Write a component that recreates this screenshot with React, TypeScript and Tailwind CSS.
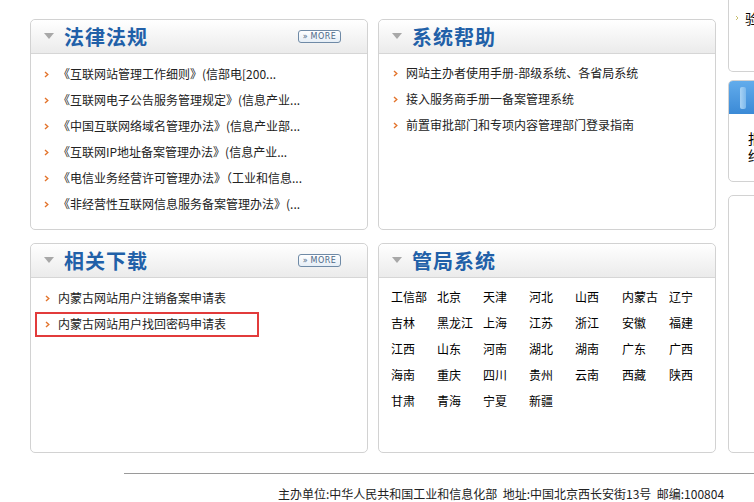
import React from 'react'

const laws = [
  '《互联网站管理工作细则》(信部电[200...',
  '《互联网电子公告服务管理规定》(信息产业...',
  '《中国互联网络域名管理办法》(信息产业部...',
  '《互联网IP地址备案管理办法》(信息产业...',
  '《电信业务经营许可管理办法》（工业和信息...',
  '《非经营性互联网信息服务备案管理办法》(...',
]

const helps = [
  '网站主办者使用手册-部级系统、各省局系统',
  '接入服务商手册一备案管理系统',
  '前置审批部门和专项内容管理部门登录指南',
]

const downloads = ['内蒙古网站用户注销备案申请表', '内蒙古网站用户找回密码申请表']

const bureaus = [
  '工信部', '北京', '天津', '河北', '山西', '内蒙古', '辽宁',
  '吉林', '黑龙江', '上海', '江苏', '浙江', '安徽', '福建',
  '江西', '山东', '河南', '湖北', '湖南', '广东', '广西',
  '海南', '重庆', '四川', '贵州', '云南', '西藏', '陕西',
  '甘肃', '青海', '宁夏', '新疆',
]

function Bullet() {
  return (
    <svg width="5" height="7" viewBox="0 0 5 7" className="shrink-0">
      <path d="M1 1 L3.8 3.5 L1 6" fill="none" stroke="#e3742c" strokeWidth="1.4" />
    </svg>
  )
}

function Triangle() {
  return (
    <svg width="10" height="7" viewBox="0 0 10 7" className="shrink-0">
      <path d="M0 0 L10 0 L5 6 Z" fill="#a8a8a8" />
    </svg>
  )
}

function Panel({ title, more, children, h }: { title: string; more?: boolean; children: React.ReactNode; h: string }) {
  return (
    <div className={`w-[338px] ${h} border border-[#d2d2d2] rounded-[5px] bg-white`}>
      <div className="h-[34px] flex items-center pl-[13px] pr-[26px] border-b border-[#d6d6d6] rounded-t-[5px] bg-gradient-to-b from-white to-[#ebebeb]">
        <Triangle />
        <span className="ml-[10px] text-[20px] leading-none font-bold text-[#2160a8] tracking-[1px]">{title}</span>
        {more && (
          <span className="ml-auto h-[13px] w-[43px] flex items-center justify-center gap-[3px] border border-[#6f8aa6] rounded-[3px] bg-gradient-to-b from-white to-[#e6eef6] text-[8px] leading-none text-[#4d6887] font-['DejaVu_Sans',sans-serif]">
            <span>»</span>
            <span className="tracking-[0.5px]">MORE</span>
          </span>
        )}
      </div>
      {children}
    </div>
  )
}

export default function App() {
  return (
    <div className="w-[754px] h-[502px] overflow-hidden bg-white font-['Noto_Sans_CJK_SC',sans-serif] text-[12px] text-[#222]">
      <div className="flex items-start h-[453px]">
        {/* main panels */}
        <div className="pl-[30px] pt-[19px] grid grid-cols-[338px_338px] gap-x-[10px] gap-y-[13px] shrink-0">
          <Panel title="法律法规" more h="h-[211px]">
            <ul className="pt-[7px] pl-[13px]">
              {laws.map((t) => (
                <li key={t} className="h-[26px] flex items-center">
                  <Bullet />
                  <span className="ml-[9px] whitespace-nowrap">{t}</span>
                </li>
              ))}
            </ul>
          </Panel>
          <Panel title="系统帮助" h="h-[211px]">
            <ul className="pt-[6px] pl-[14px]">
              {helps.map((t) => (
                <li key={t} className="h-[26px] flex items-center">
                  <Bullet />
                  <span className="ml-[8px] whitespace-nowrap">{t}</span>
                </li>
              ))}
            </ul>
          </Panel>
          <Panel title="相关下载" more h="h-[210px]">
            <ul className="pt-[7px] pl-[14px]">
              {downloads.map((t, i) => (
                <li key={t} className="relative h-[26px] flex items-center">
                  <Bullet />
                  <span className="ml-[8px] whitespace-nowrap">{t}</span>
                  {i === 1 && (
                    <span className="absolute left-[-10px] top-[1px] w-[224px] h-[25px] border-2 border-[#e23b3b]" />
                  )}
                </li>
              ))}
            </ul>
          </Panel>
          <Panel title="管局系统" h="h-[210px]">
            <div className="pt-[6px] pl-[12px] grid grid-cols-[46px_46px_46px_46px_47px_47px_47px]">
              {bureaus.map((b) => (
                <span key={b} className="h-[26px] flex items-center whitespace-nowrap text-black">{b}</span>
              ))}
            </div>
          </Panel>
        </div>

        {/* right column, cut off by the window */}
        <div className="ml-[12px] w-[200px] shrink-0 flex flex-col">
          <div className="h-[72px] border-x border-b border-[#d2d2d2] rounded-b-[5px] pl-[6px] pt-[11px]">
            <div className="flex items-center h-[14px]">
              <svg width="4" height="6" viewBox="0 0 4 6"><path d="M1 1 L3 3 L1 5" fill="none" stroke="#c9c070" strokeWidth="1" /></svg>
              <span className="ml-[6px] text-[14px] leading-none text-black">验证备案信息</span>
            </div>
          </div>
          <div className="mt-[8px] h-[102px] border border-[#d2d2d2] rounded-[5px] overflow-hidden">
            <div className="h-[33px] bg-gradient-to-b from-[#62acec] to-[#3b8ad6] flex items-center pl-[11px]">
              <span className="w-[6px] h-[22px] rounded-[2px] bg-gradient-to-r from-[#a8d2f4] to-[#7db9ec]" />
            </div>
            <div className="pl-[19px] pt-[17px] flex flex-col gap-[3px] text-[14px] leading-[14px] text-black">
              <div>报备信息</div>
              <div>终端说明</div>
            </div>
          </div>
          <div className="mt-[13px] h-[258px] border border-[#d2d2d2] rounded-[5px]" />
        </div>
      </div>

      {/* footer */}
      <div className="mt-[20px] ml-[124px] border-t border-[#9a9a9a]" />
      <div className="pt-[14px] pl-[278px] text-[12px] leading-[12px] text-[#222] whitespace-nowrap">
        主办单位:中华人民共和国工业和信息化部&nbsp;&nbsp;地址:中国北京西长安街13号&nbsp;&nbsp;邮编:100804
      </div>
    </div>
  )
}
